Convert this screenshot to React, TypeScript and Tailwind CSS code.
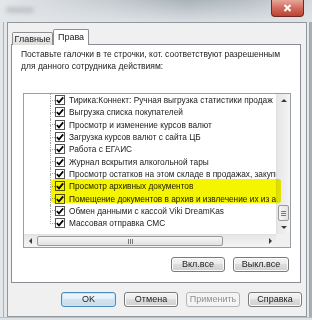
import React from "react";

const items = [
  "Тирика:Коннект: Ручная выгрузка статистики продаж",
  "Выгрузка списка покупателей",
  "Просмотр и изменение курсов валют",
  "Загрузка курсов валют с сайта ЦБ",
  "Работа с ЕГАИС",
  "Журнал вскрытия алкогольной тары",
  "Просмотр остатков на этом складе в продажах, закупках",
  "Просмотр архивных документов",
  "Помещение документов в архив и извлечение их из архива",
  "Обмен данными с кассой Viki DreamKas",
  "Массовая отправка СМС",
];

const Check = () => (
  <div className="w-[10px] h-[10px] shrink-0 border border-[#555] bg-white flex items-center justify-center">
    <svg width="8" height="8" viewBox="0 0 8 8">
      <path d="M0.8 4.2 L3 6.4 L7.2 1.4" stroke="#000" strokeWidth="1.7" fill="none" />
    </svg>
  </div>
);

const Arrow = ({ dir }: { dir: "up" | "down" | "left" | "right" }) => {
  const d = {
    up: "M0 4 L3 1 L6 4 Z",
    down: "M0 1 L3 4 L6 1 Z",
    left: "M4 0 L1 3 L4 6 Z",
    right: "M2 0 L5 3 L2 6 Z",
  }[dir];
  return (
    <svg width="6" height="6" viewBox="0 0 6 6">
      <path d={d} fill="#3a3a3a" />
    </svg>
  );
};

interface BtnProps {
  label: string;
  w: string;
  kind?: "default" | "normal" | "disabled";
}

const Btn = ({ label, w, kind = "normal" }: BtnProps) => {
  const look =
    kind === "default"
      ? "border-[#4a8cbf] bg-[linear-gradient(180deg,#f1f7fb_0%,#e4eef6_49%,#d4e3ee_50%,#c9dbe9_100%)] shadow-[inset_0_0_0_1px_#c4e4f7] text-[#222]"
      : kind === "disabled"
      ? "border-[#b3b7ba] bg-[#f4f4f4] text-[#8f8f8f]"
      : "border-[#7a7a7a] bg-[linear-gradient(180deg,#f3f3f3_0%,#ebebeb_49%,#dddddd_50%,#d0d0d0_100%)] shadow-[inset_0_0_0_1px_#fbfbfb] text-[#222]";
  return (
    <div className={`${w} h-[15px] rounded-[3px] border flex items-center justify-center text-[9px] leading-none ${look}`}>
      {label}
    </div>
  );
};

export default function App() {
  return (
    <div className="w-[312px] h-[320px] overflow-hidden flex flex-col bg-[#dde1e5] font-['Liberation_Sans',Arial,sans-serif] text-[#222]">
      {/* title bar */}
      <div className="h-[22px] shrink-0 flex items-start justify-between bg-[linear-gradient(180deg,rgba(230,233,236,0)_0%,rgba(226,230,233,0.85)_100%),linear-gradient(90deg,#e4e7ea_0%,#c6ccd2_35%,#aab2ba_60%,#b9c0c6_80%,#d6dadf_100%)]">
        <div className="mt-[7px] ml-[6px] w-[28px] h-[6px] rounded-full bg-[#c0c4c8] blur-[2px]" />
        <div className="mr-[8px] w-[33px] h-[17px] rounded-b-[4px] border border-t-0 border-[#6e2a22] bg-[linear-gradient(180deg,#e6a699_0%,#d26c5e_50%,#c0412f_100%)] flex items-center justify-center">
          <svg width="9" height="8" viewBox="0 0 9 8">
            <path d="M1.5 1 L7.5 7 M7.5 1 L1.5 7" stroke="#fff" strokeWidth="2" />
          </svg>
        </div>
      </div>

      <div className="flex-1 flex">
        <div className="w-[7px] shrink-0 flex">
          <div className="w-[3px] bg-[#e3e6e9]" />
          <div className="w-[1px] bg-[#a9b0b7]" />
          <div className="flex-1 bg-[#e4e7ea]" />
        </div>

        {/* client area */}
        <div className="flex-1 bg-[#f0f0f0] border border-[#8f979f] flex flex-col">
          {/* tabs */}
          <div className="relative z-10 -mb-[1px] mt-[6px] pl-[4px] flex items-end h-[16px]">
            <div className="w-[41px] h-[13px] rounded-t-[2px] border border-b-0 border-[#8c8e94] bg-[linear-gradient(180deg,#f7f7f7_0%,#e8e8e8_50%,#dedede_100%)] flex items-center justify-center text-[9px] leading-none pt-[1px]">
              Главные
            </div>
            <div className="w-[36px] h-[16px] rounded-t-[2px] border border-b-0 border-[#8c8e94] bg-white flex items-center justify-center text-[9px] leading-none">
              Права
            </div>
          </div>

          {/* tab panel */}
          <div className="ml-[3px] mr-[5px] h-[239px] border border-[#898c95] bg-white px-[9px] pt-[3px] flex flex-col">
            <p className="text-[8.5px] leading-[12px]">
              Поставьте галочки в те строчки, кот. соответствуют разрешенным
              <br />
              для данного сотрудника действиям:
            </p>

            <div className="relative mt-[21px] ml-[2px] w-[268px] h-[155px] border border-[#9a9ea5] bg-white">
              <div className="grid grid-cols-[1fr_14px] grid-rows-[1fr_13px] h-full">
                <div className="overflow-hidden">
                  {items.map((t, i) => (
                    <div key={t} className="flex h-[12.3px]">
                      <div className="w-[26px] shrink-0" />
                      <div className="w-[5px] shrink-0 flex flex-col">
                        <div className="flex-1 border-l border-b border-dotted border-[#a5a5a5]" />
                        <div
                          className={`flex-1 ${
                            i === items.length - 1 ? "" : "border-l border-dotted border-[#a5a5a5]"
                          }`}
                        />
                      </div>
                      <div className="flex items-center">
                        <Check />
                      </div>
                      <span className="ml-[4px] self-center whitespace-nowrap text-[8.3px] leading-[12px]">
                        {t}
                      </span>
                    </div>
                  ))}
                </div>

                {/* vertical scrollbar */}
                <div className="flex flex-col bg-[linear-gradient(90deg,#e6e6e6_0%,#f4f4f4_100%)] border-l border-[#e0e0e0]">
                  <div className="h-[14px] flex items-center justify-center">
                    <Arrow dir="up" />
                  </div>
                  <div className="flex-1" />
                  <div className="mx-[1px] h-[16px] rounded-[2px] border border-[#9a9a9a] bg-[linear-gradient(90deg,#f5f5f5_0%,#e3e3e3_100%)] flex flex-col items-center justify-center gap-[1px]">
                    <div className="w-[5px] h-[1px] bg-[#777]" />
                    <div className="w-[5px] h-[1px] bg-[#777]" />
                    <div className="w-[5px] h-[1px] bg-[#777]" />
                  </div>
                  <div className="h-[13px] flex items-center justify-center">
                    <Arrow dir="down" />
                  </div>
                </div>

                {/* horizontal scrollbar */}
                <div className="flex items-stretch bg-[linear-gradient(180deg,#e6e6e6_0%,#f4f4f4_100%)] border-t border-[#e0e0e0]">
                  <div className="w-[13px] flex items-center justify-center">
                    <Arrow dir="left" />
                  </div>
                  <div className="my-[1px] w-[186px] rounded-[2px] border border-[#9a9a9a] bg-[linear-gradient(180deg,#f5f5f5_0%,#e1e1e1_100%)] flex items-center justify-center gap-[1px]">
                    <div className="w-[1px] h-[5px] bg-[#777]" />
                    <div className="w-[1px] h-[5px] bg-[#777]" />
                    <div className="w-[1px] h-[5px] bg-[#777]" />
                  </div>
                  <div className="flex-1" />
                  <div className="w-[13px] flex items-center justify-center">
                    <Arrow dir="right" />
                  </div>
                </div>
                <div className="bg-[#f0f0f0]" />
              </div>

              {/* marker highlight */}
              <div className="absolute left-[27px] top-[85px] w-[230px] h-[24px] rounded-[3px] bg-[#f5f500] mix-blend-multiply" />
            </div>

            <div className="mt-[9px] mr-[2px] flex justify-end gap-[8px]">
              <Btn label="Вкл.все" w="w-[54px]" />
              <Btn label="Выкл.все" w="w-[56px]" />
            </div>
          </div>

          {/* dialog buttons */}
          <div className="mt-[9px] mr-[4px] flex justify-end gap-[8px]">
            <Btn label="OK" w="w-[55px]" kind="default" />
            <Btn label="Отмена" w="w-[54px]" />
            <Btn label="Применить" w="w-[54px]" kind="disabled" />
            <Btn label="Справка" w="w-[54px]" />
          </div>
        </div>

        <div className="w-[7px] shrink-0 flex">
          <div className="w-[2px] bg-[#e6e9ec]" />
          <div className="w-[1px] bg-[#9ea5ac]" />
          <div className="flex-1 bg-[#a9afb5]" />
        </div>
      </div>
      <div className="h-[3px] shrink-0 bg-[#dfe2e5] border-t border-[#b9bfc5]" />
    </div>
  );
}
